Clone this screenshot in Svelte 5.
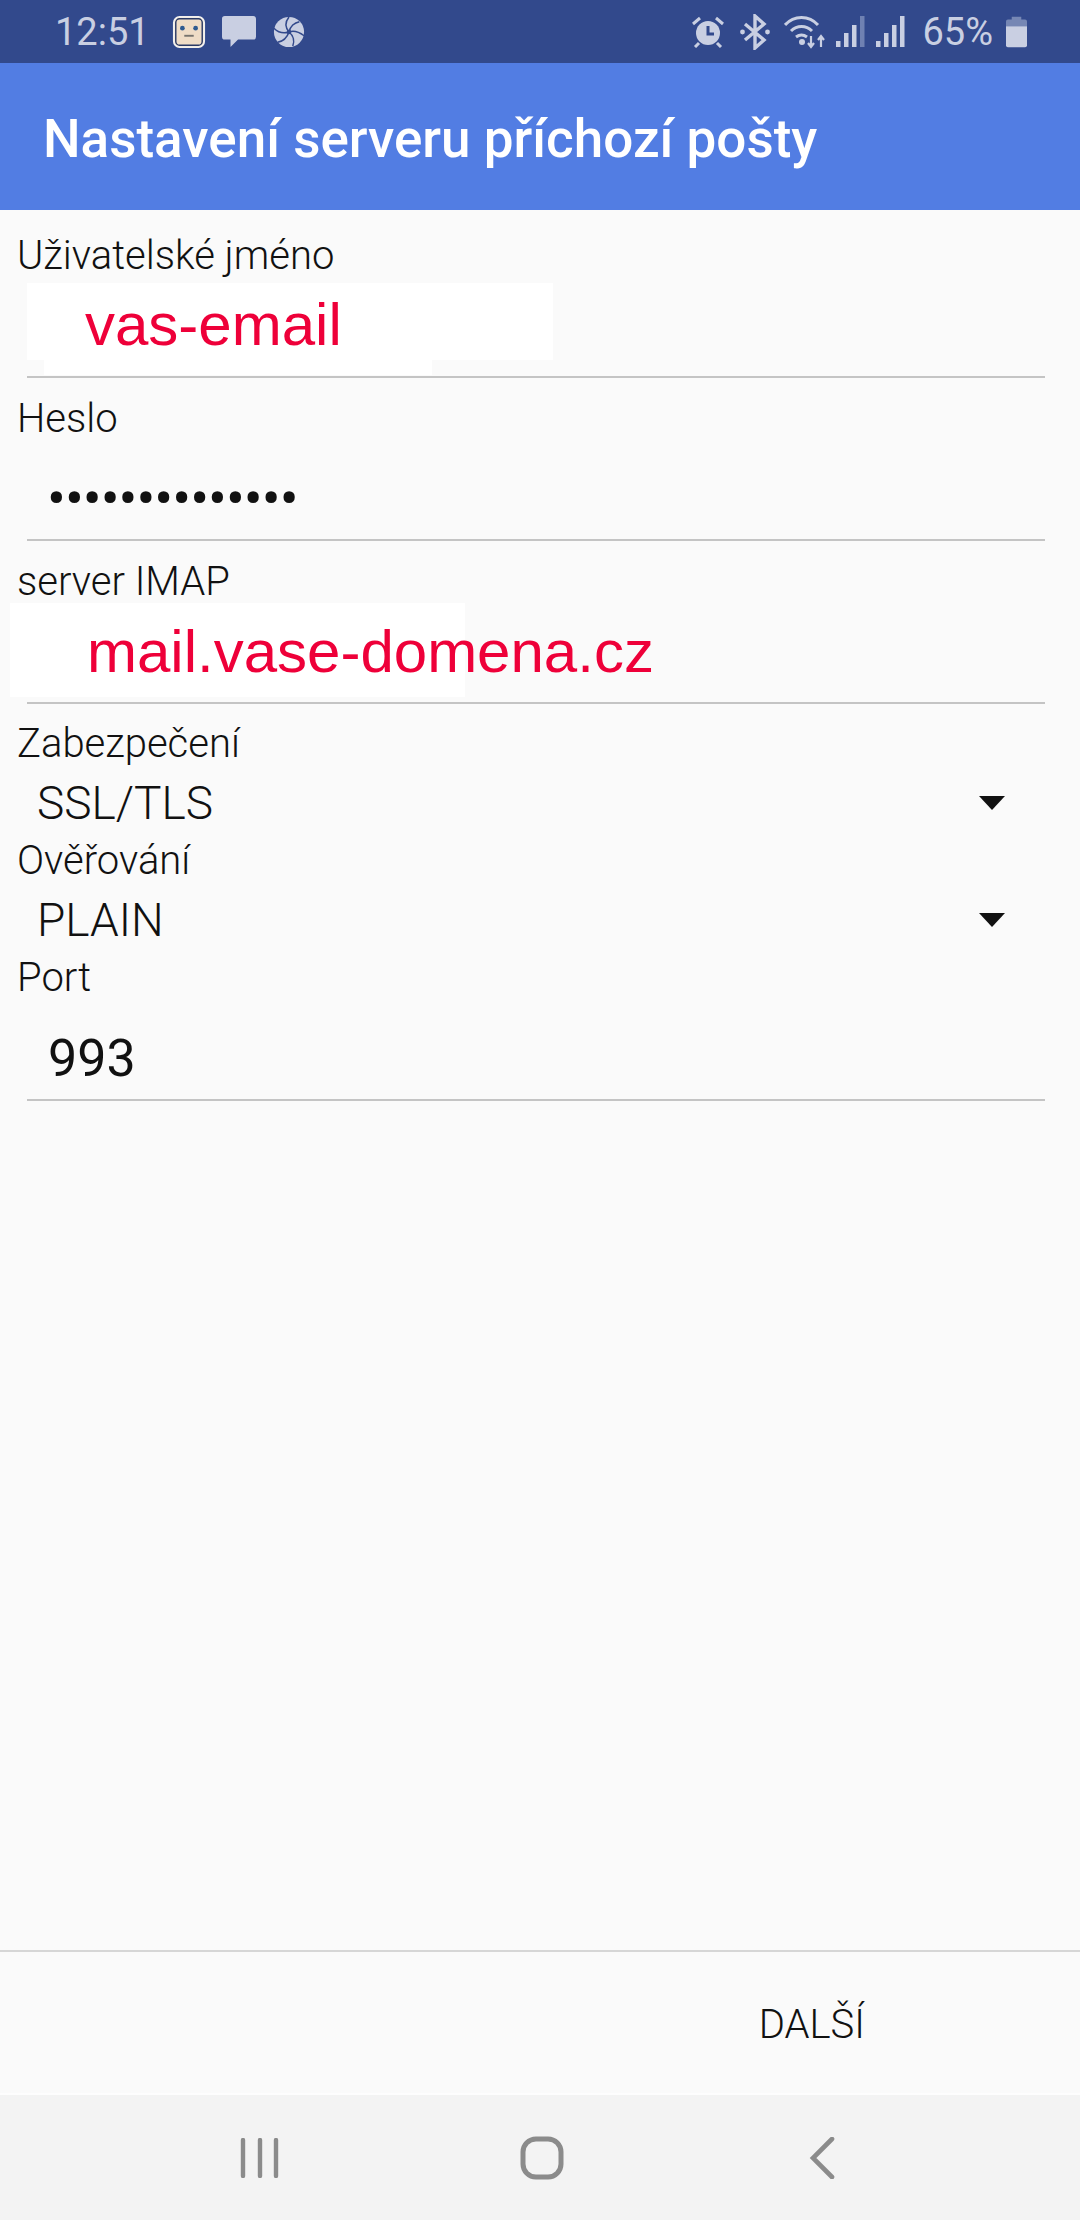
<script lang="ts">
  const password = "••••••••••••••";
</script>

<div class="phone">
  <div class="statusbar">
    <span class="time">12:51</span>
    <svg class="ic" width="34" height="34" viewBox="0 0 36 36">
      <rect x="2" y="2" width="32" height="32" rx="6" fill="#efdcc6" stroke="#f2f0ee" stroke-width="2"/>
      <rect x="4" y="4" width="28" height="28" rx="4" fill="none" stroke="#2a3a66" stroke-width="1.5"/>
      <circle cx="11" cy="14" r="2.5" fill="#2f5a90"/>
      <circle cx="25" cy="14" r="2.5" fill="#2f5a90"/>
      <rect x="13" y="21" width="10" height="2" fill="#77736e"/>
    </svg>
    <svg class="ic chat" width="34" height="34" viewBox="0 0 36 36">
      <path d="M3 1h30a3 3 0 0 1 3 3v19a3 3 0 0 1-3 3H17l-8 8v-8H3a3 3 0 0 1-3-3V4a3 3 0 0 1 3-3z" fill="#c9cfe2"/>
    </svg>
    <svg class="ic shutter" width="32" height="32" viewBox="0 0 34 34">
      <circle cx="17" cy="17" r="16" fill="#c9cfe2"/>
      <g stroke="#32498c" stroke-width="1.6" fill="none">
        <path d="M17 17C13 12 13 6 17 1"/>
        <path d="M17 17C18 11 23 7 28 6"/>
        <path d="M17 17C23 15 29 18 33 21"/>
        <path d="M17 17C22 21 23 27 21 32"/>
        <path d="M17 17C15 23 10 27 5 28"/>
        <path d="M17 17C11 19 5 17 1 13"/>
      </g>
      <circle cx="17" cy="17" r="2.5" fill="#32498c"/>
    </svg>
    <span class="spacer"></span>
    <svg class="ic" width="34" height="32" viewBox="0 0 34 32">
      <circle cx="17" cy="17" r="12" fill="#c9cfe2"/>
      <path d="M17 10v8h6" stroke="#32498c" stroke-width="3" fill="none"/>
      <path d="M2 8l7-6M32 8l-7-6M8 27l-4 4M26 27l4 4" stroke="#c9cfe2" stroke-width="3"/>
    </svg>
    <svg class="ic bt" width="30" height="36" viewBox="0 0 30 36">
      <path d="M5 10l19 16-9 8V2l9 8L5 26" stroke="#c9cfe2" stroke-width="3.4" fill="none"/>
      <circle cx="2.5" cy="18" r="2.4" fill="#c9cfe2"/>
      <circle cx="27.5" cy="18" r="2.4" fill="#c9cfe2"/>
    </svg>
    <svg class="ic wifi" width="41" height="34" viewBox="0 0 41 34">
      <path d="M1 10C10 0 25 0 34 10M7 16c6-6 15-6 21 0M12 22c4-3 7-3 11 0" stroke="#c9cfe2" stroke-width="3" fill="none"/>
      <circle cx="18" cy="27" r="3" fill="#c9cfe2"/>
      <path d="M27 21v10M24 28l3 4 3-4M37 32V22M34 25l3-4 3 4" stroke="#c9cfe2" stroke-width="2.2" fill="none"/>
    </svg>
    <svg class="ic sig" width="29" height="31" viewBox="0 0 29 31">
      <rect x="0" y="25" width="4.5" height="6" fill="#c9cfe2"/>
      <rect x="8" y="17" width="4.5" height="14" fill="#c9cfe2"/>
      <rect x="16" y="9" width="4.5" height="22" fill="#c9cfe2"/>
      <rect x="24" y="0" width="4.5" height="31" fill="#6f81b2"/>
    </svg>
    <svg class="ic sig" width="29" height="31" viewBox="0 0 29 31">
      <rect x="0" y="25" width="4.5" height="6" fill="#c9cfe2"/>
      <rect x="8" y="17" width="4.5" height="14" fill="#c9cfe2"/>
      <rect x="16" y="9" width="4.5" height="22" fill="#c9cfe2"/>
      <rect x="24" y="0" width="4.5" height="31" fill="#c9cfe2"/>
    </svg>
    <span class="pct">65%</span>
    <svg class="ic batt" width="21" height="32" viewBox="0 0 22 32">
      <path d="M6 0h10v3h4a2 2 0 0 1 2 2v5H0V5a2 2 0 0 1 2-2h4z" fill="#7687b4"/>
      <path d="M0 10h22v20a2 2 0 0 1-2 2H2a2 2 0 0 1-2-2z" fill="#c9cfe2"/>
    </svg>
  </div>

  <header class="appbar">Nastavení serveru příchozí pošty</header>

  <main class="form">
    <div class="field">
      <div class="label">Uživatelské jméno</div>
      <div class="input">
        <span class="patch first">vas-email</span>
      </div>
    </div>
    <div class="field">
      <div class="label">Heslo</div>
      <div class="input">
        <span class="dots">{password}</span>
      </div>
    </div>
    <div class="field">
      <div class="label">server IMAP</div>
      <div class="input">
        <span class="patch second">mail.vase-domena.cz</span>
      </div>
    </div>

    <div class="label spin-label top">Zabezpečení</div>
    <div class="spinner">
      <span>SSL/TLS</span>
      <svg width="26" height="14" viewBox="0 0 26 14"><path d="M0 0h26L13 14z" fill="#111"/></svg>
    </div>
    <div class="label spin-label">Ověřování</div>
    <div class="spinner">
      <span>PLAIN</span>
      <svg width="26" height="14" viewBox="0 0 26 14"><path d="M0 0h26L13 14z" fill="#111"/></svg>
    </div>
    <div class="label spin-label">Port</div>
    <div class="input port">
      <span>993</span>
    </div>
  </main>

  <footer class="actions">
    <span class="next">DALŠÍ</span>
  </footer>

  <nav class="navbar">
    <svg width="40" height="40" viewBox="0 0 40 40">
      <path d="M3 2v36M20 2v36M36 2v36" stroke="#8b8b8b" stroke-width="4.4" stroke-linecap="round"/>
    </svg>
    <svg class="home" width="44" height="44" viewBox="0 0 44 44">
      <rect x="3" y="3" width="38" height="38" rx="13" fill="none" stroke="#8b8b8b" stroke-width="5"/>
    </svg>
    <svg width="26" height="42" viewBox="0 0 26 42">
      <path d="M23 2L4 21l19 19" stroke="#8b8b8b" stroke-width="4.6" fill="none" stroke-linecap="round"/>
    </svg>
  </nav>
</div>

<style>
  :global(body) {
    margin: 0;
    background: #fafafa;
  }

  .phone {
    width: 1080px;
    height: 2220px;
    display: flex;
    flex-direction: column;
    font-family: Roboto, "Noto Sans", sans-serif;
    background: #fafafa;
    color: #111;
    overflow: hidden;
  }

  .statusbar {
    height: 63px;
    flex: none;
    box-sizing: border-box;
    padding: 0 53px 0 55px;
    display: flex;
    align-items: center;
    background: #32498c;
    color: #c9cfe2;
  }
  .time {
    font-size: 38px;
    margin-right: 22px;
  }
  .chat { margin-left: 16px; }
  .shutter { margin-left: 17px; }
  .spacer { flex: 1; }
  .bt { margin-left: 15px; }
  .wifi { margin-left: 14px; }
  .sig { margin-left: 11px; }
  .pct {
    font-size: 38px;
    margin-left: 17px;
  }
  .batt { margin-left: 13px; }

  .appbar {
    height: 147px;
    flex: none;
    box-sizing: border-box;
    padding: 4px 0 0 43px;
    display: flex;
    align-items: center;
    background: #527de3;
    color: #fff;
    font-size: 53px;
    font-weight: 500;
  }

  .form {
    flex: 1;
    padding-top: 5px;
  }

  .field {
    height: 163px;
    display: flex;
    flex-direction: column;
  }

  .label {
    height: 54px;
    line-height: 54px;
    padding-left: 17px;
    font-size: 40px;
    font-weight: 300;
  }
  .field .label { padding-top: 14px; }

  .input {
    flex: 1;
    margin: 0 35px 0 27px;
    display: flex;
    align-items: center;
    border-bottom: 2px solid #c4c4c4;
  }

  .patch {
    align-self: flex-start;
    position: relative;
    box-sizing: border-box;
    white-space: nowrap;
    background: #fff;
    color: #ee0039;
    font-family: "Liberation Sans", Arial, sans-serif;
    font-size: 60px;
  }
  .first {
    width: 526px;
    height: 77px;
    line-height: 83px;
    margin-top: 0;
    padding-left: 58px;
  }
  /* the paint-over in the original runs a bit lower than the box */
  .first::after {
    content: "";
    position: absolute;
    left: 17px;
    top: 77px;
    width: 388px;
    height: 15px;
    background: #fff;
  }
  .second {
    width: 455px;
    height: 94px;
    line-height: 98px;
    margin: -6px 0 0 -17px;
    padding-left: 77px;
  }

  .dots {
    padding: 12px 0 0 20px;
    font-size: 56px;
    letter-spacing: -1px;
  }

  .spin-label {
    height: 58px;
    line-height: 58px;
  }
  .top { margin-top: 11px; }

  .spinner {
    height: 59px;
    box-sizing: border-box;
    padding: 0 75px 0 37px;
    display: flex;
    align-items: center;
    justify-content: space-between;
    font-size: 46px;
    font-weight: 300;
  }

  .port {
    height: 94px;
    flex: none;
    box-sizing: border-box;
    padding: 10px 0 0 21px;
    font-size: 52px;
  }

  .actions {
    height: 143px;
    flex: none;
    box-sizing: border-box;
    padding: 3px 215px 0 0;
    display: flex;
    align-items: center;
    justify-content: flex-end;
    border-top: 2px solid #d6d6d6;
  }
  .next {
    font-size: 40px;
    font-weight: 300;
  }

  .navbar {
    height: 127px;
    flex: none;
    box-sizing: border-box;
    padding: 0 245px 0 240px;
    display: flex;
    align-items: center;
    justify-content: space-between;
    background: #f3f3f3;
    border-top: 2px solid #fdfdfd;
  }
  .home { margin-right: 6px; }
</style>
